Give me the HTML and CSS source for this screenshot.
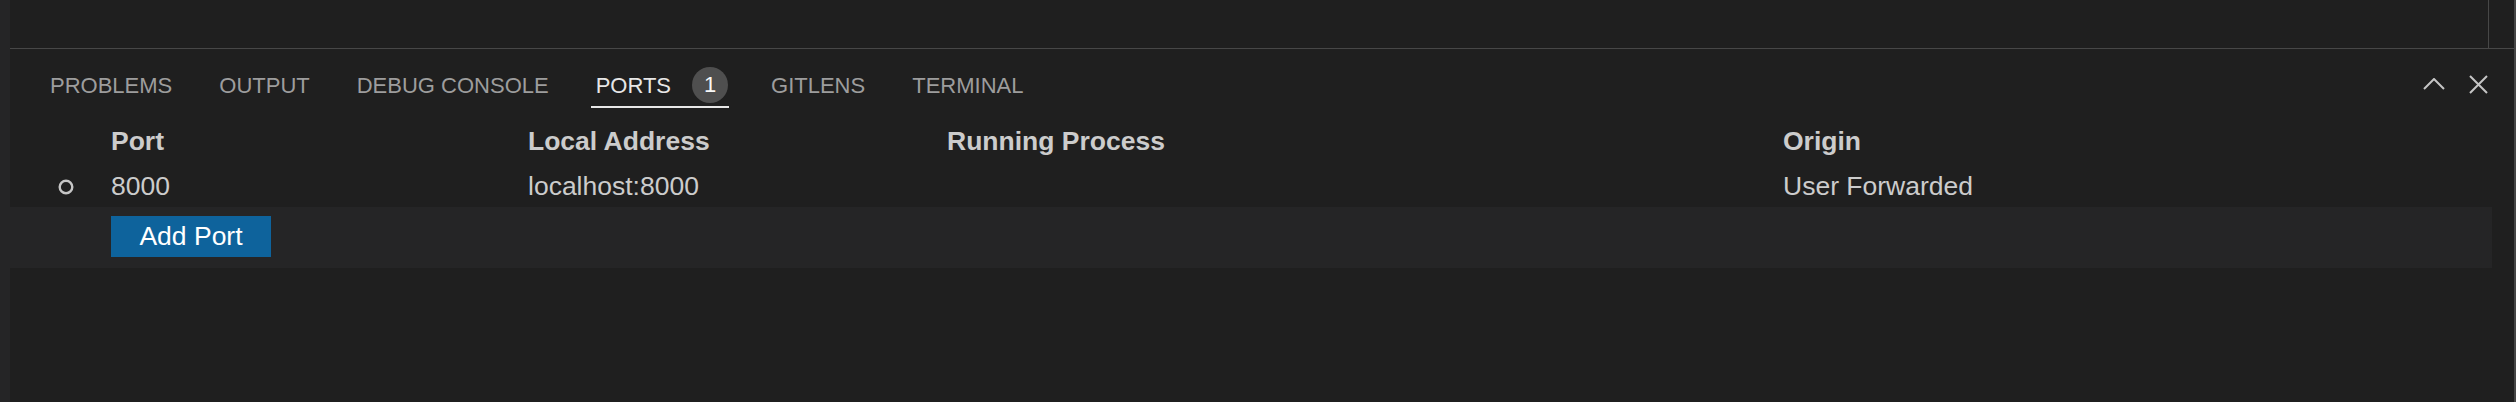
FILE: index.html
```html
<!DOCTYPE html>
<html lang="en">
<head>
<meta charset="utf-8">
<title>Ports</title>
<link rel="stylesheet" href="styles.css">
</head>
<body>
<div class="window">
  <div class="gutter"></div>
  <div class="main">
    <div class="editor">
      <div class="editor-content"></div>
      <div class="editor-ruler"></div>
      <div class="editor-side"></div>
    </div>
    <div class="panel">
      <div class="panel-header">
        <div class="tabs">
          <div class="tab">PROBLEMS</div>
          <div class="tab">OUTPUT</div>
          <div class="tab">DEBUG CONSOLE</div>
          <div class="tab active">PORTS<span class="badge">1</span></div>
          <div class="tab">GITLENS</div>
          <div class="tab">TERMINAL</div>
        </div>
        <div class="actions">
          <svg class="icon-chevron" width="22" height="12" viewBox="0 0 22 12"><polyline points="1,11 11,1 21,11" fill="none" stroke="#c5c5c5" stroke-width="2"/></svg>
          <svg class="icon-close" width="19" height="19" viewBox="0 0 19 19"><path d="M1 1 L18 18 M18 1 L1 18" fill="none" stroke="#c5c5c5" stroke-width="2"/></svg>
        </div>
      </div>
      <div class="table">
        <div class="row head">
          <div class="cell"></div>
          <div class="cell">Port</div>
          <div class="cell">Local Address</div>
          <div class="cell">Running Process</div>
          <div class="cell">Origin</div>
        </div>
        <div class="row data">
          <div class="cell icon-cell"><svg width="16" height="16" viewBox="0 0 16 16"><circle cx="8" cy="8" r="6.3" fill="none" stroke="#c5c5c5" stroke-width="2.4"/></svg></div>
          <div class="cell">8000</div>
          <div class="cell">localhost:8000</div>
          <div class="cell"></div>
          <div class="cell">User Forwarded</div>
        </div>
        <div class="row add">
          <div class="cell"></div>
          <div class="cell"><button class="btn">Add Port</button></div>
        </div>
      </div>
    </div>
  </div>
  <div class="edge"></div>
</div>
</body>
</html>
```
FILE: styles.css
```css
html, body {
  margin: 0;
  padding: 0;
  background: #1f1f1f;
}

.window {
  display: flex;
  height: 402px;
  font-family: "Liberation Sans", Arial, sans-serif;
}

.gutter {
  width: 10px;
  background: #252526;
  flex: none;
}

.edge {
  width: 2px;
  background: #454545;
  flex: none;
}

.main {
  flex: 1;
  min-width: 0;
  display: flex;
  flex-direction: column;
}

.editor {
  height: 48px;
  display: flex;
  border-bottom: 1px solid #474747;
  flex: none;
}

.editor-content {
  flex: 1;
}

.editor-ruler {
  width: 1px;
  background: #474747;
}

.editor-side {
  width: 25px;
}

.panel-header {
  display: flex;
  padding-top: 14px;
}

.tabs {
  display: flex;
  gap: 37px;
  padding-left: 35px;
}

.tab {
  height: 43px;
  padding: 2px 5px 0;
  box-sizing: border-box;
  height: 45px;
  display: flex;
  align-items: center;
  font-size: 22px;
  color: #9d9d9d;
  border-bottom: 2px solid transparent;
  white-space: nowrap;
}

.tab.active {
  color: #e7e7e7;
  border-bottom-color: #e7e7e7;
  padding-right: 1px;
}

.badge {
  width: 36px;
  height: 36px;
  margin-left: 21px;
  margin-top: -2px;
  border-radius: 50%;
  background: #4f4f4f;
  color: #f8f8f8;
  font-size: 22px;
  display: flex;
  align-items: center;
  justify-content: center;
  line-height: 1;
}

.actions {
  margin-left: auto;
  height: 43px;
  display: flex;
  align-items: center;
  gap: 24px;
  padding-right: 26px;
}

.icon-chevron {
  margin-top: -2px;
}

.table {
  margin-top: 9px;
  margin-right: 22px;
  font-size: 26.5px;
  color: #cccccc;
}

.row {
  display: grid;
  grid-template-columns: 101px 417px 419px 836px 1fr;
  box-sizing: border-box;
}

.row.head {
  height: 46px;
  padding-top: 2px;
  line-height: 44px;
  font-weight: 700;
}

.row.data {
  height: 44px;
  padding-top: 3px;
  line-height: 41px;
}

.cell {
  white-space: nowrap;
}

.icon-cell {
  display: flex;
  align-items: center;
  padding-left: 48px;
}

.row.add {
  background: #252526;
  padding: 9px 0 11px;
}

.btn {
  display: block;
  width: 160px;
  height: 41px;
  padding: 0;
  border: none;
  background: #0e639c;
  color: #ffffff;
  font-family: "Liberation Sans", Arial, sans-serif;
  font-size: 26.5px;
  line-height: 41px;
}
```
